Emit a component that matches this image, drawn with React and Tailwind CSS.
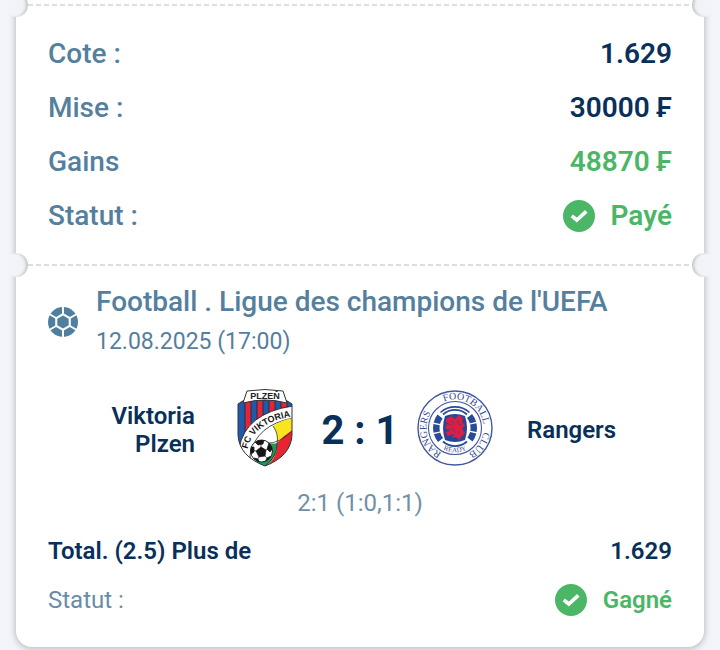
import React from "react";

function Notch({ side }) {
  const place =
    side === "left"
      ? "-left-3 bg-linear-to-r from-[#f3f5fb] to-[#f1f2f5] shadow-[inset_-3px_0_3px_-1px_#c3c5c9]"
      : "-right-3 bg-linear-to-l from-[#f3f5fb] to-[#f1f2f5] shadow-[inset_3px_0_3px_-1px_#c3c5c9]";
  return <span aria-hidden="true" className={`absolute -top-[11px] size-6 rounded-full ${place}`} />;
}

function Separator() {
  return (
    <div className="relative h-[2px]">
      <div className="mx-3 h-full bg-[repeating-linear-gradient(90deg,#dedede_0_5px,#ffffff_5px_8px)]" />
      <Notch side="left" />
      <Notch side="right" />
    </div>
  );
}

function CheckBadge() {
  return (
    <svg viewBox="0 0 32 32" className="size-8 shrink-0" aria-hidden="true">
      <circle cx="16" cy="16" r="16" fill="#4bb766" />
      <path d="M8.800 15.800 13.800 20 23.300 11.300" fill="none" stroke="#fff" strokeWidth="3.600" />
    </svg>
  );
}

function BallIcon() {
  const turns = [0, 60, 120, 180, 240, 300];
  return (
    <svg viewBox="-15 -15 30 30" className="size-[30px] shrink-0" aria-hidden="true">
      <circle r="15" fill="#4f7f9f" />
      {turns.map((turn) => (
        <path key={turn} d="M0-16V-8" transform={`rotate(${turn})`} stroke="#fff" strokeWidth="2" />
      ))}
      <path d="M0-9 7.800-4.500V4.500L0 9-7.800 4.500V-4.500Z" fill="#fff" />
      <path d="M0-6.600 5.700-3.300V3.300L0 6.600-5.700 3.300V-3.300Z" fill="#4f7f9f" />
    </svg>
  );
}

function ViktoriaCrest() {
  return (
    <svg viewBox="0 0 56 78" className="h-[78px] w-14 overflow-visible" role="img" aria-label="Viktoria Plzen">
      <defs>
        <clipPath id="plzen-shield">
          <path d="M1 15Q5 12 8 11L48 11Q51 12 55 15V46Q54 67 28 77Q2 67 1 46Z" />
        </clipPath>
        <clipPath id="plzen-ball">
          <circle cx="24.500" cy="62" r="11" />
        </clipPath>
        <path id="plzen-band" d="M10.500 60Q16 33 60 26.500" />
      </defs>
      <g clipPath="url(#plzen-shield)">
        <rect width="56" height="78" fill="#1f5aa8" />
        {[8, 20, 32, 44].map((x) => (
          <rect key={x} x={x} y="8" width="6" height="50" fill="#e32636" stroke="#1d2342" strokeWidth="0.8" />
        ))}
        <path d="M2 60Q8 24 56 17V78H0Z" fill="#fff" stroke="#222" strokeWidth="0.8" />
        <path d="M13 66Q19 36 56 29V78H14Z" fill="#fff" stroke="#222" strokeWidth="0.8" />
        <path d="M36 37Q44 31 56 29V43L40 54Q41 44 36 37Z" fill="#f7e51d" />
        <path d="M40 54Q47 46 56 41V78H28Q41 69 40 54Z" fill="#e52532" />
        <path d="M32 54Q37 55 40 54Q41 68 28 78L19 73Z" fill="#1c9956" />
        <path d="M36 37Q42 45 40 55Q40 68 28 77M30 54Q42 55 56 41" fill="none" stroke="#222" strokeWidth="0.7" />
      </g>
      <path d="M1 15Q5 12 8 11L48 11Q51 12 55 15V46Q54 67 28 77Q2 67 1 46Z" fill="none" stroke="#33333d" strokeWidth="1" />
      <path d="M6 14 10 2Q28-1 46 2L50 14Q28 8 6 14Z" fill="#fff" stroke="#333" strokeWidth="1" />
      <circle cx="24.500" cy="62" r="11" fill="#fff" stroke="#222" />
      <g clipPath="url(#plzen-ball)" fill="#161616" stroke="#161616" strokeWidth="0.7">
        <path d="m24 58 5 3-1 6-6 1-3-6ZM20 50l7 1-1 4-5 1-3-3ZM32 54l4 5-3 4-3-3ZM13 58l4 0 0 5-4 3ZM17 69l4 1 2 5-6 0ZM30 69l4-2-1 6-5 0Z" />
        <path d="m24 58 0-3M29 61l2-1M28 67l3 3M22 68l-2 3M19 62l-3-1" />
      </g>
      <text x="28" y="9.500" textAnchor="middle" fontSize="9" className="fill-[#222222] font-['Liberation_Sans',sans-serif] font-bold">PLZEŇ</text>
      <text fontSize="9" className="fill-[#161616] font-['Liberation_Sans',sans-serif] font-bold">
        <textPath href="#plzen-band">FC VIKTORIA</textPath>
      </text>
    </svg>
  );
}

function RangersCrest() {
  const word = "fill-[#35498f] font-['Liberation_Serif',serif] font-normal";
  return (
    <svg viewBox="-38 -38 76 76" className="size-[76px] overflow-visible" role="img" aria-label="Rangers">
      <defs>
        <path id="rfc-ring" d="M0 28.500A28.500 28.500 0 0 1 0-28.500A28.500 28.500 0 0 1 0 28.500" />
        <path id="rfc-ready" d="M-18 16.500A24.500 24.500 0 0 0 18 16.500" />
      </defs>
      <circle r="37" fill="#fff" stroke="#42569c" strokeWidth="1.400" />
      <circle r="26.500" fill="none" stroke="#42569c" strokeWidth="1.100" />
      <g fill="none" stroke="#294a96">
        <path d="M14.500-12A19 19 0 0 1 14.500 12" strokeWidth="6.500" strokeDasharray="7.500 1.300" />
        <path d="M-14.500 12A19 19 0 0 1-14.500-12" strokeWidth="6.500" strokeDasharray="7.500 1.300" />
        <path d="M-14.500-15.500A21.500 21.500 0 0 1 14.500-15.500" strokeWidth="1.600" />
        <path d="M-12-13.500A18 18 0 0 1 12-13.500M-12 13.500A18 18 0 0 0 12 13.500" strokeWidth="1.800" />
      </g>
      <path d="M-10-12Q0-16 10-12Q14 0 10 12Q0 16-10 12Q-14 0-10-12Z" fill="#244896" />
      <path d="M-9-9-4-12 0-9 4-13 8-10 7-6 10-3 7 1 10 5 6 9 5 12 1 9-3 10-1 6-7 8-10 4-5 3-10 0-8-4-4-3-9-6Z" fill="#dc1e43" />
      <path d="m-5-7 4 2-3 3M3-8l0 4 4 1M-6 1l5 0 1 4M5 3l-2 3" fill="none" stroke="#244896" strokeWidth="0.500" />
      <text fontSize="10" className={word}><textPath href="#rfc-ring" startOffset="14">RANGERS</textPath></text>
      <text fontSize="10" className={word}><textPath href="#rfc-ring" startOffset="78">FOOTBALL</textPath></text>
      <text fontSize="10" className={word}><textPath href="#rfc-ring" startOffset="138">CLUB</textPath></text>
      <text fontSize="7" className={word}><textPath href="#rfc-ready" startOffset="50%" textAnchor="middle">READY</textPath></text>
    </svg>
  );
}

function SummaryRow({ label, children, tone = "text-[#08305a]" }) {
  return (
    <div className="flex h-[54px] items-center justify-between">
      <dt className="font-medium text-[#557f9e]">{label}</dt>
      <dd className={`flex items-center gap-4 font-semibold ${tone}`}>{children}</dd>
    </div>
  );
}

export default function App() {
  return (
    <div className="min-h-screen overflow-hidden bg-[#f3f5fb] px-4 font-[Roboto,sans-serif]">
      <main className="rounded-b-2xl bg-white pt-1 shadow-[0_1px_6px_1px_#b9bbc0]">
        <Separator />
        <dl className="px-8 pt-[21px] pb-[21px] text-[28px] leading-8">
          <SummaryRow label="Cote :">1.629</SummaryRow>
          <SummaryRow label="Mise :">30000 ₣</SummaryRow>
          <SummaryRow label="Gains" tone="text-[#4bb766]">48870 ₣</SummaryRow>
          <SummaryRow label="Statut :" tone="text-[#4bb766]"><CheckBadge />Payé</SummaryRow>
        </dl>
        <Separator />
        <section className="px-8 pt-4 pb-[22px]">
          <header className="flex items-center gap-[18px] text-[#557f9e]">
            <BallIcon />
            <div>
              <h2 className="text-[28px] leading-10 font-medium">Football . Ligue des champions de l'UEFA</h2>
              <p className="text-[23px] leading-10">12.08.2025 (17:00)</p>
            </div>
          </header>
          <div className="mt-[27px] grid grid-cols-[1fr_76px_114px_76px_1fr] items-center text-2xl leading-7 font-semibold text-[#08305a]">
            <p className="flex flex-col items-end pt-1 pr-8">
              <span>Viktoria</span>
              <span>Plzen</span>
            </p>
            <div className="flex justify-center"><ViktoriaCrest /></div>
            <p className="pt-1.5 text-center text-[40px] leading-10 font-bold">2 : 1</p>
            <RangersCrest />
            <p className="pt-1 pl-[34px]">Rangers</p>
          </div>
          <p className="mt-4 text-center text-2xl leading-10 text-[#7090a8]">2:1 (1:0,1:1)</p>
          <dl className="mt-1 text-2xl">
            <div className="flex h-12 items-center justify-between font-semibold text-[#08305a]">
              <dt>Total. (2.5) Plus de</dt>
              <dd>1.629</dd>
            </div>
            <div className="flex h-[50px] items-center justify-between">
              <dt className="text-[#6a8ca6]">Statut :</dt>
              <dd className="flex items-center gap-4 font-semibold text-[#4bb766]"><CheckBadge />Gagné</dd>
            </div>
          </dl>
        </section>
      </main>
    </div>
  );
}
